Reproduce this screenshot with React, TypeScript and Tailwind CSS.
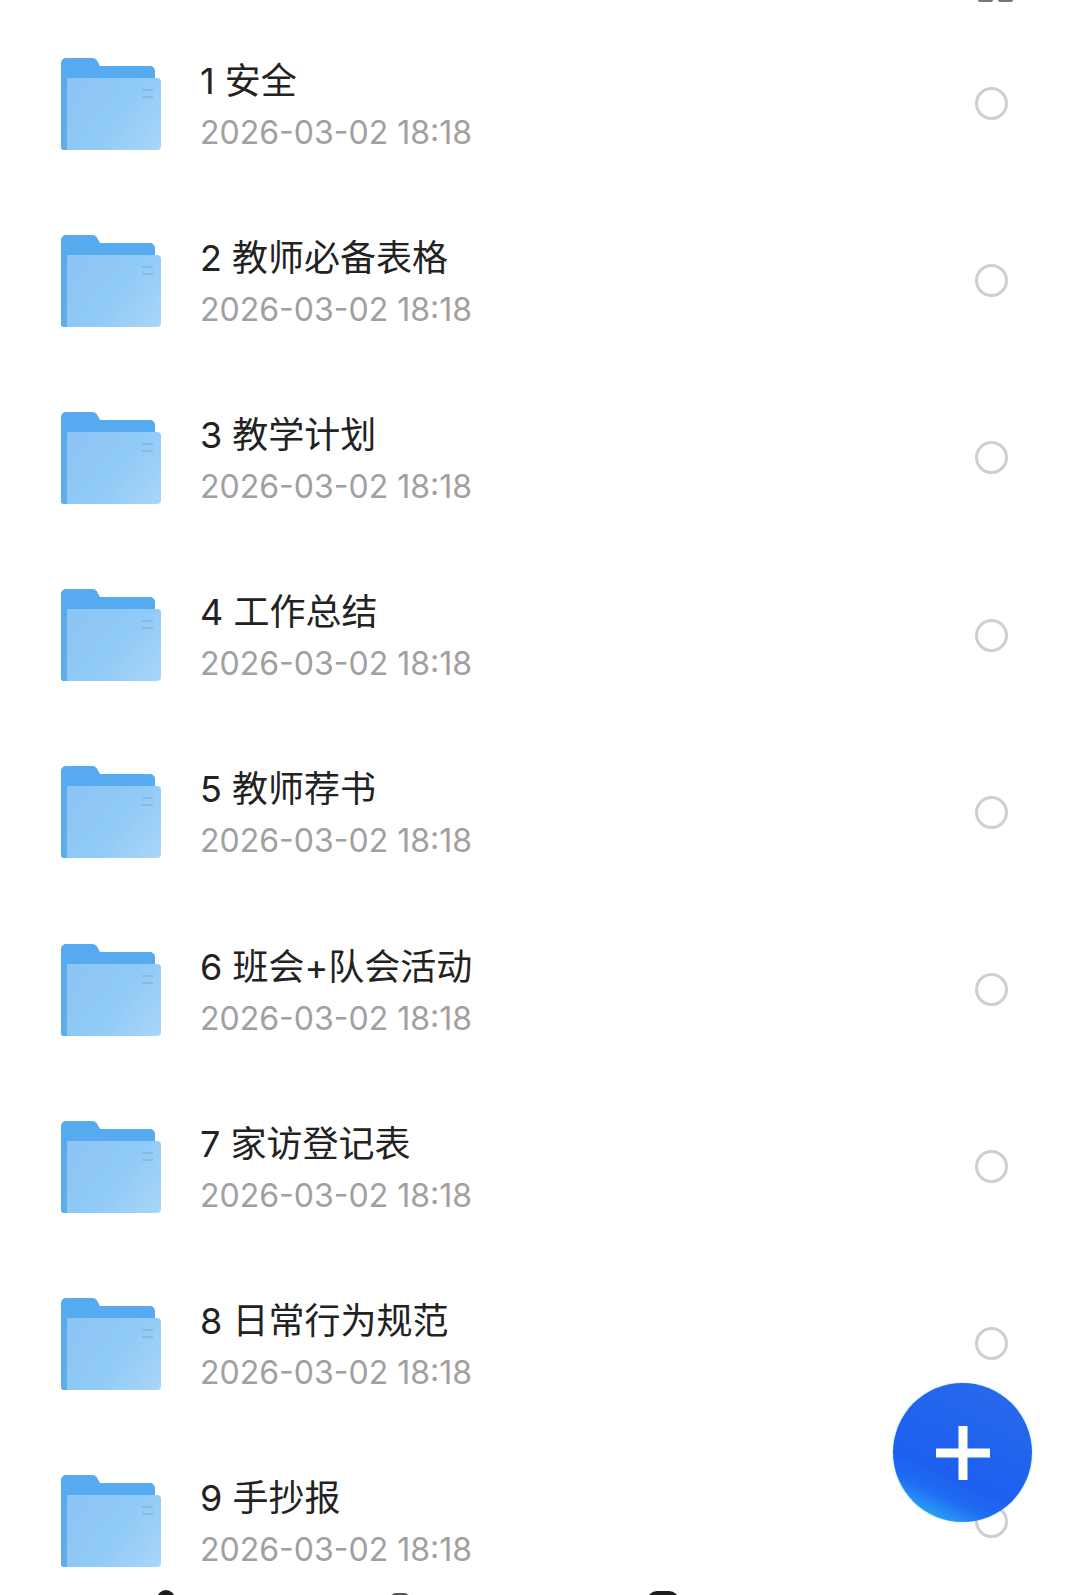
const folders = [
  "1 安全",
  "2 教师必备表格",
  "3 教学计划",
  "4 工作总结",
  "5 教师荐书",
  "6 班会+队会活动",
  "7 家访登记表",
  "8 日常行为规范",
  "9 手抄报",
];

function FolderIcon({ id }: { id: string }) {
  return (
    <svg width="100" height="94" viewBox="0 0 100 94" fill="none" aria-hidden className="shrink-0">
      <defs>
        <linearGradient id={`front-${id}`} x1="5" y1="22" x2="95" y2="92" gradientUnits="userSpaceOnUse">
          <stop offset="0" stopColor="#8cc4f3" />
          <stop offset="0.55" stopColor="#90caf6" />
          <stop offset="1" stopColor="#a8d5f9" />
        </linearGradient>
      </defs>
      <path
        d="M0 6a5 5 0 0 1 5-5h26c3 0 4.5 1.5 5.5 3.5L39 9h50a5 5 0 0 1 5 5v13H6v66H4a4 4 0 0 1-4-4z"
        fill="#56aaf0"
      />
      <path d="M0 30h6v63H3a3 3 0 0 1-3-3z" fill="#5eaeec" />
      <path d="M6 21h90a4 4 0 0 1 4 4v64a4 4 0 0 1-4 4H6z" fill={`url(#front-${id})`} />
      <path d="M81 33h11M81 40h11" stroke="#83bbe9" strokeWidth="2" />
    </svg>
  );
}

function FolderRow({ name, index }: { name: string; index: number }) {
  return (
    <li className="flex h-[177.2px] items-center pl-[61px] pr-[72px]">
      <FolderIcon id={String(index)} />
      <div className="ml-[39px] min-w-0 flex-1 pt-[6px] font-['Inter','Noto_Sans_CJK_SC',sans-serif]">
        <p className="text-[36px] leading-[50px] text-[#222222]">{name}</p>
        <p className="mt-[2px] text-[32px] leading-[50px] text-[#a0a0a0]">2026-03-02 18:18</p>
      </div>
      <span className="size-[33px] shrink-0 rounded-full border-[3px] border-[#cfcfcf]" />
    </li>
  );
}

export default function App() {
  return (
    <div className="relative h-[1595px] w-[1080px] overflow-hidden bg-white">
      <div className="flex h-[15px] justify-end gap-[5px] pr-[67px]">
        <span className="h-[2px] w-[15px] rounded-b bg-[#777777]" />
        <span className="h-[2px] w-[15px] rounded-b bg-[#777777]" />
      </div>

      <ul>
        {folders.map((name, i) => (
          <FolderRow key={name} name={name} index={i} />
        ))}
      </ul>

      {/* tab bar, nearly cut off at the bottom edge */}
      <div className="absolute inset-x-0 bottom-0 h-[5px] overflow-hidden">
        <div className="flex pl-[157px]">
          <span className="h-[20px] w-[18px] rounded-full bg-[#1c1c1c]" />
          <span className="ml-[215px] mt-[3px] h-[20px] w-[20px] rounded-md bg-[#555555]" />
          <span className="ml-[237px] mt-[1px] h-[20px] w-[32px] rounded-full bg-[#1c1c1c]" />
        </div>
      </div>

      <button
        aria-label="新建"
        className="absolute left-[893px] top-[1383px] flex size-[139px] items-center justify-center rounded-full bg-[linear-gradient(205deg,#2a6bea_0%,#1d5ff0_64%,#1f6cf2_76%,#2fb8f8_94%)] shadow-[0_0_2px_#7fd8ff]"
      >
        <svg width="54" height="54" viewBox="0 0 54 54" aria-hidden>
          <path d="M22.5 0h9v22.5H54v9H31.5V54h-9V31.5H0v-9h22.5z" fill="#ffffff" />
        </svg>
      </button>
    </div>
  );
}
